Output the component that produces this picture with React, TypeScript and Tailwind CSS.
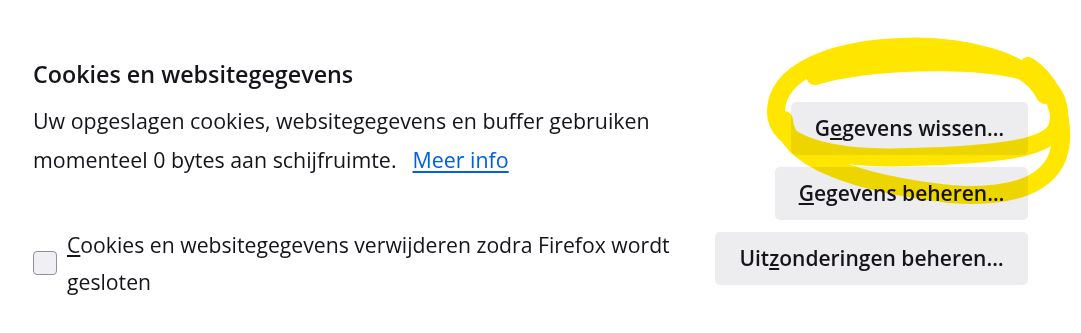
import React from "react"

function Button({ children, className = "" }: { children: React.ReactNode; className?: string }) {
    return (
        <button className={"h-[53px] rounded-[5px] bg-[#ededf0] text-[21px] font-semibold text-[#15141a] " + className}>
            {children}
        </button>
    )
}

function Highlight() {
    // freehand marker drawn round the first button
    return (
        <svg className="absolute left-0 top-0 pointer-events-none mix-blend-multiply" width="1081" height="333" viewBox="0 0 1081 333">
            <g fill="none" stroke="#ffe600" strokeWidth="18" strokeLinecap="round" strokeLinejoin="round">
                <path d="M 1045 95 C 1030 60, 960 44, 900 47 C 830 50, 778 72, 776 110 C 774 145, 830 160, 910 157 C 990 155, 1052 150, 1058 125 C 1063 100, 1050 82, 1020 70 C 970 58, 870 60, 815 76" />
                <path d="M 784 120 C 786 160, 860 184, 950 194 C 1030 200, 1064 175, 1061 130 C 1059 98, 1046 78, 1028 66" />
            </g>
        </svg>
    )
}

export default function App() {
    return (
        <div className="relative w-[1081px] h-[333px] bg-white text-[#15141a] font-['Open_Sans',sans-serif] overflow-hidden">
            <div className="pl-[33px] pr-[53px] pt-[57px]">
                <div className="flex justify-between">
                    <div>
                        <h2 className="text-[23.3px] font-semibold leading-[34px]">Cookies en websitegegevens</h2>
                        <p className="mt-[10px] text-[21.4px] leading-[39px]">
                            Uw opgeslagen cookies, websitegegevens en buffer gebruiken
                            <br />
                            momenteel 0 bytes aan schijfruimte.
                            <a href="#" className="ml-[16px] text-[#0061e0] underline underline-offset-[3px]">Meer info</a>
                        </p>
                    </div>
                    <div className="flex flex-col items-end gap-[12px] pt-[45px]">
                        <Button className="w-[237px]">G<u>e</u>gevens wissen…</Button>
                        <Button className="w-[253px] h-[52px]"><u>G</u>egevens beheren…</Button>
                    </div>
                </div>
                <div className="flex justify-between mt-[6px]">
                    <label className="flex items-center gap-[10px]">
                        <span className="w-[24px] h-[24px] shrink-0 rounded-[4px] border border-[#8f8f9d] bg-[#f0f0f4]" />
                        <span className="text-[21.2px] leading-[37px]">
                            <u>C</u>ookies en websitegegevens verwijderen zodra Firefox wordt
                            <br />
                            gesloten
                        </span>
                    </label>
                    <Button className="w-[313px] h-[52px] mt-[6px]">Uit<u>z</u>onderingen beheren…</Button>
                </div>
            </div>
            <Highlight />
        </div>
    )
}
